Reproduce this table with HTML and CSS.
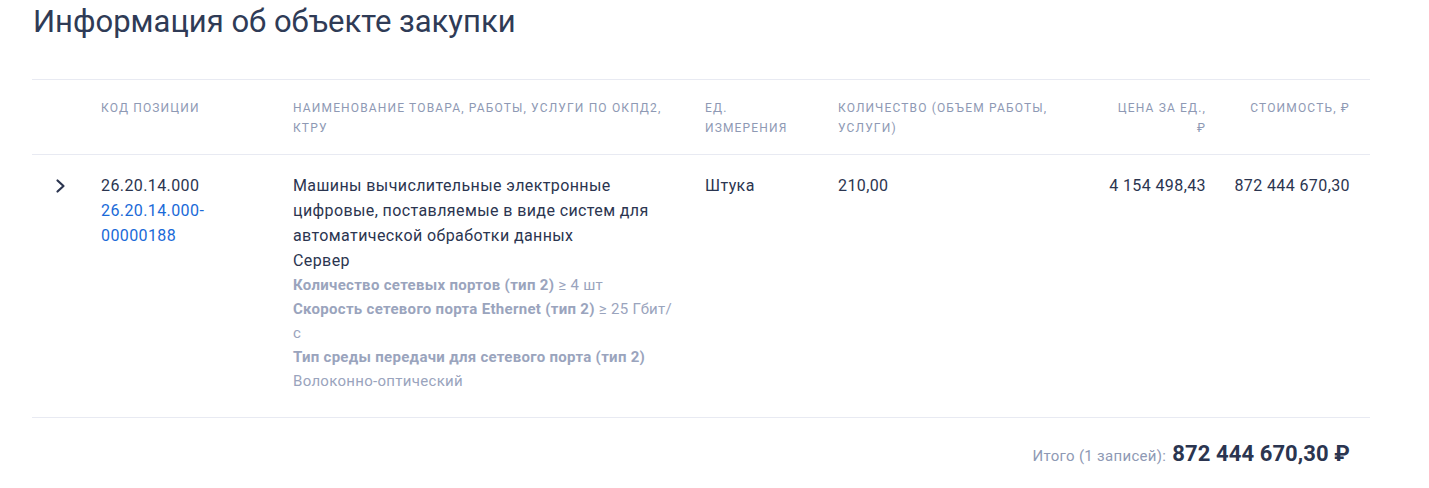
FILE: index.html
```html
<!DOCTYPE html>
<html lang="ru">
<head>
<meta charset="utf-8">
<title>Информация об объекте закупки</title>
<link rel="stylesheet" href="styles.css">
</head>
<body>
<section class="page">
  <h1 class="title">Информация об объекте закупки</h1>
  <div class="table">
    <div class="row head">
      <div class="cell"></div>
      <div class="cell code">Код позиции</div>
      <div class="cell">Наименование товара, работы, услуги по ОКПД2, КТРУ</div>
      <div class="cell unit">Ед. измерения</div>
      <div class="cell qty">Количество (объем работы, услуги)</div>
      <div class="cell num price">Цена за ед., ₽</div>
      <div class="cell num">Стоимость, ₽</div>
    </div>
    <div class="row body">
      <div class="cell toggle">
        <svg width="14" height="16" viewBox="0 0 14 16" aria-hidden="true"><path d="M3.5 2.5 L9.5 8 L3.5 13.5" fill="none" stroke="#2b3550" stroke-width="2.2" stroke-linecap="round" stroke-linejoin="round"/></svg>
      </div>
      <div class="cell code">
        <div>26.20.14.000</div>
        <a class="link" href="#">26.20.14.000-00000188</a>
      </div>
      <div class="cell name">
        <div class="main">Машины вычислительные электронные цифровые, поставляемые в виде систем для автоматической обработки данных</div>
        <div class="main">Сервер</div>
        <div class="chars">
          <div><b>Количество сетевых портов (тип 2)</b> ≥&nbsp;4&nbsp;шт</div>
          <div><b>Скорость сетевого порта Ethernet (тип 2)</b> ≥&nbsp;25&nbsp;Гбит/<wbr>с</div>
          <div><b>Тип среды передачи для сетевого порта (тип 2)</b></div>
          <div>Волоконно-оптический</div>
        </div>
      </div>
      <div class="cell unit">Штука</div>
      <div class="cell qty">210,00</div>
      <div class="cell num">4 154 498,43</div>
      <div class="cell num">872 444 670,30</div>
    </div>
  </div>
  <div class="total">
    <span class="total-label">Итого (1 записей):</span>
    <span class="total-value">872 444 670,30 ₽</span>
  </div>
</section>
</body>
</html>
```
FILE: styles.css
```css
* { box-sizing: border-box; }
body {
  margin: 0;
  background: #ffffff;
  font-family: Roboto, "Noto Sans", sans-serif;
  color: #2b3550;
}
.page {
  padding: 2px 59px 0 32px;
}
.title {
  margin: 0 0 37px 1px;
  font-size: 31px;
  line-height: 40px;
  font-weight: 400;
  color: #2f3b56;
}
.table {
  border-top: 1px solid #e8eaf2;
}
.row {
  display: grid;
  grid-template-columns: 69px 192px 412px 133px 253px 135px 144px;
  border-bottom: 1px solid #e8eaf2;
}
.cell {
  padding-right: 20px;
}
.cell.code { padding-right: 32px; }
.cell.name { padding-right: 28px; }
.cell.num { text-align: right; white-space: nowrap; }
.head .price { padding-left: 20px; white-space: normal; }
.head {
  padding: 18px 0 16px;
  font-size: 12px;
  line-height: 20px;
  letter-spacing: 1.15px;
  text-transform: uppercase;
  color: #8e99b4;
}
.head .unit { padding-right: 30px; }
.head .qty { padding-right: 40px; }
.body {
  padding: 18px 0 24px;
  font-size: 16px;
  line-height: 25px;
  letter-spacing: 0.4px;
  color: #2b3550;
}
.toggle {
  padding: 5px 0 0 22px;
}
.toggle svg { display: block; }
.link {
  color: #1a6ad8;
  text-decoration: none;
}
.chars {
  font-size: 15px;
  line-height: 24px;
  letter-spacing: 0.3px;
  color: #9aa4bd;
}
.chars b { font-weight: 700; }
.total {
  display: flex;
  justify-content: flex-end;
  align-items: baseline;
  gap: 6px;
  padding: 23px 20px 0 0;
}
.total-label {
  font-size: 15px;
  letter-spacing: 0.3px;
  color: #8e99b4;
}
.total-value {
  font-size: 22px;
  font-weight: 700;
  letter-spacing: 0.1px;
  color: #2b3550;
}
```
